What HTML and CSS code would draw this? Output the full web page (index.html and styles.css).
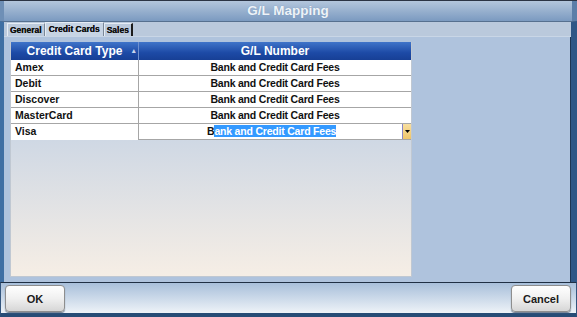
FILE: index.html
```html
<!DOCTYPE html>
<html lang="en">
<head>
    <meta charset="UTF-8">
    <title>G/L Mapping</title>
    <link rel="stylesheet" href="styles.css">
</head>
<body>
    <div class="window">
        <div class="titlebar">G/L Mapping</div>
        <div class="main">
            <div class="tabs">
                <div class="tab">General</div>
                <div class="tab active">Credit Cards</div>
                <div class="tab last">Sales</div>
            </div>
            <div class="panel">
                <div class="grid">
                    <div class="grid-head">
                        <div class="col-type">Credit Card Type <span class="sort">&#9652;</span></div>
                        <div class="col-gl">G/L Number</div>
                    </div>
                    <div class="row">
                        <div class="col-type">Amex</div>
                        <div class="col-gl">Bank and Credit Card Fees</div>
                    </div>
                    <div class="row">
                        <div class="col-type">Debit</div>
                        <div class="col-gl">Bank and Credit Card Fees</div>
                    </div>
                    <div class="row">
                        <div class="col-type">Discover</div>
                        <div class="col-gl">Bank and Credit Card Fees</div>
                    </div>
                    <div class="row">
                        <div class="col-type">MasterCard</div>
                        <div class="col-gl">Bank and Credit Card Fees</div>
                    </div>
                    <div class="row editing">
                        <div class="col-type">Visa</div>
                        <div class="col-gl">
                            <span class="edit-text">B<span class="selected">ank and Credit Card Fees</span></span>
                            <span class="drop">
                                <svg width="5" height="3" viewBox="0 0 5 3"><path d="M0 0h5L2.5 3z" fill="#000"/></svg>
                            </span>
                        </div>
                    </div>
                    <div class="grid-empty"></div>
                </div>
            </div>
        </div>
        <div class="footer">
            <button class="btn">OK</button>
            <button class="btn">Cancel</button>
        </div>
    </div>
</body>
</html>
```

FILE: styles.css
```css
* {
    box-sizing: border-box;
}
body {
    margin: 0;
    font-family: "Liberation Sans", Arial, sans-serif;
    background: #1f2d40;
}
.window {
    width: 577px;
    height: 317px;
    display: flex;
    flex-direction: column;
    border-top: 1px solid #2b3444;
}
.titlebar {
    height: 20px;
    background: linear-gradient(#b3c6dc, #7b9ac0);
    color: #eef3f8;
    font-size: 13.5px;
    font-weight: bold;
    text-align: center;
    line-height: 20px;
    text-shadow: 0 0 1px #6f8db2;
    border-left: 4px solid #6e8fb6;
    border-right: 5px solid #5c7ea8;
}
.main {
    flex: 1;
    display: flex;
    flex-direction: column;
    border-left: 4px solid #3f6fa3;
    border-right: 6px solid #2f5686;
    border-top: 1px solid #56708f;
}
.tabs {
    height: 15px;
    display: flex;
    align-items: flex-end;
    padding-left: 3px;
    background: #bac9dc;
    border-bottom: 1px solid #c9d6e6;
}
.tab {
    height: 13px;
    padding: 0 2px;
    font-size: 8.5px;
    font-weight: bold;
    line-height: 13px;
    color: #111;
    background: #bccadc;
    border-left: 1px solid #e6edf5;
    border-top: 1px solid #e6edf5;
    border-right: 1px solid #7b8898;
    text-shadow: 0 0 0.4px #111;
}
.tab.active {
    height: 14px;
    padding: 0 3px;
    background: #c7d4e4;
}
.tab.last {
    border-right: 2px solid #1c1c1c;
}
.panel {
    flex: 1;
    background: #afc3dd;
    padding: 5px 0 5px 6px;
    border-right: 1px solid #1e3552;
}
.grid {
    width: 402px;
    height: 235px;
    display: flex;
    flex-direction: column;
    border: 1px solid #c0c8d2;
    border-top: none;
}
.grid-head {
    height: 18px;
    display: flex;
    background: linear-gradient(#3f74c9, #1d4aa6 60%, #173f95);
    color: #fff;
    font-size: 12px;
    font-weight: bold;
    line-height: 18px;
}
.grid-head .col-type {
    border-right: 1px solid #6d8fcf;
    text-align: center;
    position: relative;
}
.sort {
    position: absolute;
    right: 2px;
    top: 0;
    font-size: 7px;
    color: #c9d6ee;
}
.col-type {
    width: 128px;
    flex-shrink: 0;
}
.col-gl {
    flex: 1;
    text-align: center;
}
.row {
    height: 16px;
    display: flex;
    background: #fff;
    border-bottom: 1px solid #a6a6a6;
    font-size: 10.5px;
    font-weight: bold;
    line-height: 15px;
    color: #111;
}
.row .col-type {
    padding-left: 4px;
    border-right: 1px solid #a6a6a6;
    font-size: 10.5px;
}
.row .col-gl {
    letter-spacing: -0.2px;
}
.row.editing {
    border-bottom: none;
}
.row.editing .col-gl {
    display: flex;
    align-items: center;
    justify-content: space-between;
    padding-left: 68px;
    border-bottom: 1px solid #a6a6a6;
}
.selected {
    background: #3399ff;
    color: #fff;
}
.drop {
    width: 9px;
    height: 15px;
    display: flex;
    align-items: center;
    justify-content: center;
    background: linear-gradient(#f8dfa0, #efc56a);
    border-left: 1px solid #8a86c4;
}
.grid-empty {
    flex: 1;
    background: linear-gradient(#cfd8e4, #f6eee5);
}
.footer {
    height: 35px;
    display: flex;
    justify-content: space-between;
    align-items: flex-start;
    padding: 2px 5px 0 4px;
    background: linear-gradient(#a8bfda, #eef3f8);
    border-top: 1px solid #1f2f44;
    border-bottom: 4px solid #274c76;
    border-left: 1px solid #33557d;
    border-right: 1px solid #33557d;
}
.btn {
    width: 60px;
    height: 27px;
    font-family: "Liberation Sans", Arial, sans-serif;
    font-size: 11px;
    font-weight: bold;
    color: #1a1a1a;
    background: linear-gradient(#ffffff, #f0f0f0 50%, #d6d6d6);
    border: 1px solid #8e8e8e;
    border-radius: 4px;
    box-shadow: 0 1px 1px #6c7c90;
}
```
